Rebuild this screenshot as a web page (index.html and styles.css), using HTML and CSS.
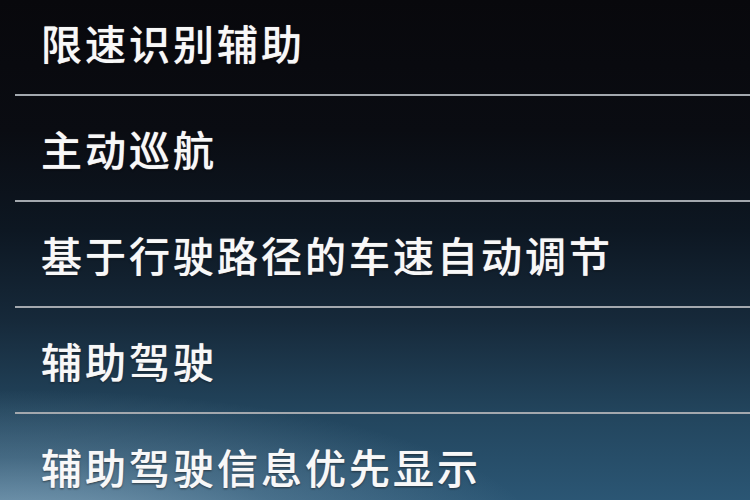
FILE: index.html
```html
<!DOCTYPE html>
<html lang="zh-CN">
<head>
<meta charset="utf-8">
<link rel="stylesheet" href="styles.css">
</head>
<body>
<div class="screen">
  <ul class="menu">
    <li class="item">限速识别辅助</li>
    <li class="item">主动巡航</li>
    <li class="item">基于行驶路径的车速自动调节</li>
    <li class="item">辅助驾驶</li>
    <li class="item">辅助驾驶信息优先显示</li>
  </ul>
</div>
</body>
</html>
```
FILE: styles.css
```css
html, body {
  margin: 0;
  padding: 0;
  width: 750px;
  height: 500px;
  overflow: hidden;
}
.screen {
  width: 750px;
  height: 500px;
  overflow: hidden;
  background:
    radial-gradient(ellipse 520px 150px at 20px 540px, rgba(160,190,210,0.8), rgba(160,190,210,0.25) 55%, rgba(160,190,210,0) 100%),
    linear-gradient(to bottom, #08080c 0px, #0a0c12 130px, #0d1722 230px, #16293a 320px, #22445c 410px, #2b5674 500px);
}
.menu {
  list-style: none;
  margin: -10px 0 0 15px;
  padding: 0;
}
.item {
  height: 104px;
  border-bottom: 2px solid #a3a8ae;
  display: flex;
  align-items: center;
  padding-left: 26px;
  font-family: "Noto Sans CJK SC", "Noto Sans", sans-serif;
  font-weight: 500;
  font-size: 41px;
  letter-spacing: 3px;
  color: #f8f8f8;
  text-shadow: 0 0 1px rgba(255,255,255,0.6), 0 1px 2px rgba(0,0,0,0.6);
}
```
